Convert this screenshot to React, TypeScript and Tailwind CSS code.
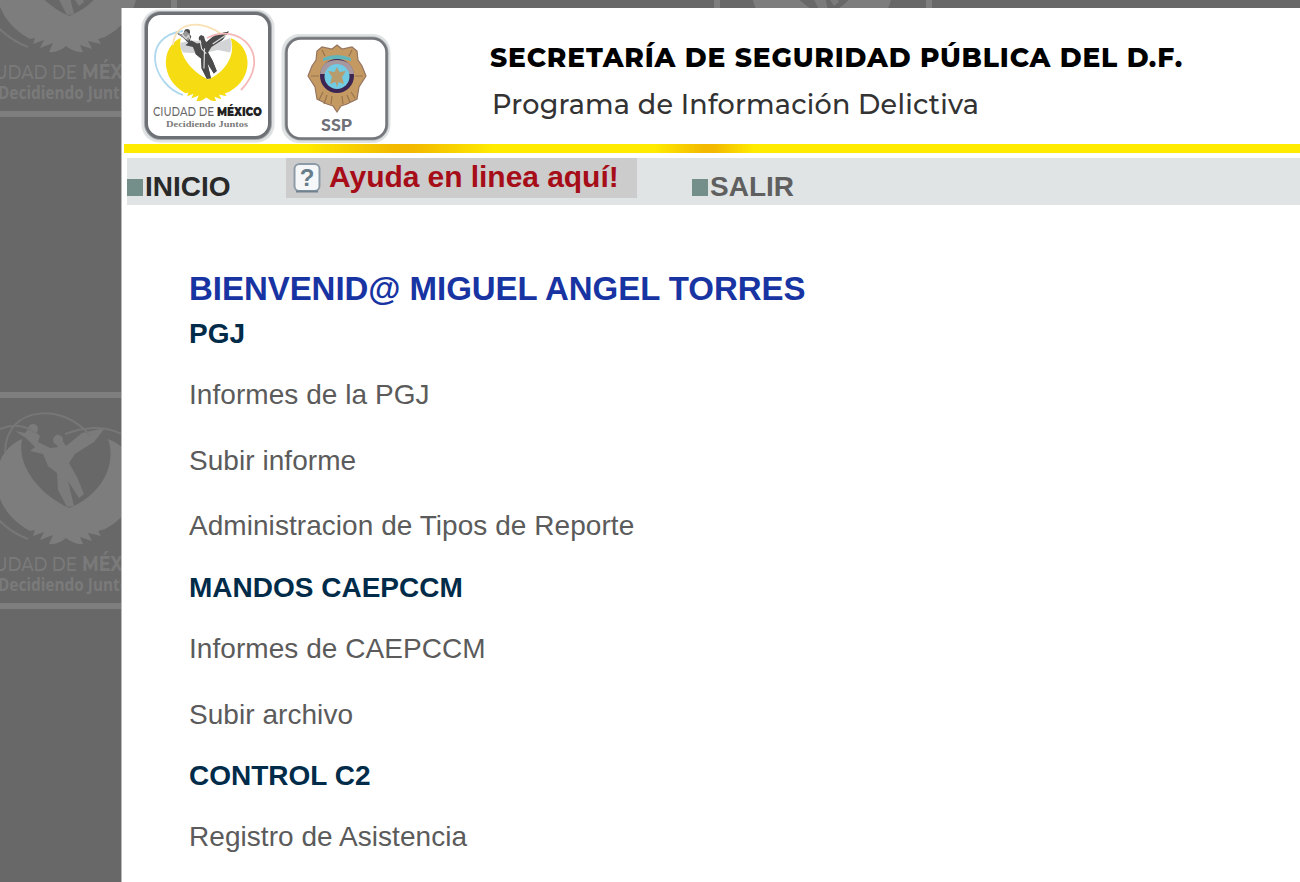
import type { ReactNode } from "react";

const figurePath =
  "M15 22L25 24L30 18L40 27L38 33L50 39L58 38L54 31L57 25L62 31L66 37L82 24L105 19L94 33L75 45L69 54L77 68L84 85L79 89L68 72L74 97L67 98L58 81L57 64L48 57L43 45L30 42L35 38L26 29Z";

function Wings({ fill, heart, figure }: { fill: string; heart: string; figure: string }) {
  return (
    <g>
      <path
        d="M22 30C-12 44 -15 98 30 122L35 121L33 127L44 123L40 131L53 126L49 135Q58 136 66 129Q75 136 83 135L80 128L92 132L88 124L101 127L98 122L105 120C150 96 145 44 108 30Z"
        fill={fill}
      />
      <path d="M22 30C16 60 44 88 69 99C98 88 118 58 108 30Q67 13 22 30Z" fill={heart} />
      <path d={figurePath} fill={figure} />
      <circle cx="33" cy="20" r="5" fill={figure} />
      <circle cx="58" cy="31" r="5" fill={figure} />
    </g>
  );
}

function WatermarkTile({ x, y, caption = true }: { x: number; y: number; caption?: boolean }) {
  return (
    <g transform={`translate(${x} ${y})`}>
      <rect x="-38" y="4" width="212" height="211" rx="4" fill="none" stroke="#7e7e7e" strokeWidth="6" />
      <g transform="translate(0 18)">
        <Wings fill="#7d7d7d" heart="#686868" figure="#7b7b7b" />
        <path d="M5 43C6 -6 67 -5 90 27M0 20Q20 12 35 24M-5 107Q9 123 28 130M65 25Q104 10 134 32" fill="none" stroke="#777" strokeWidth="2" />
      </g>
      {caption && (
        <>
          <text x="-23" y="180" fontSize="21" fontWeight="500" textLength="100" lengthAdjust="spacingAndGlyphs" fill="#7a7a7a" fontFamily="Montserrat, sans-serif">
            CIUDAD DE
          </text>
          <text x="82" y="180" fontSize="21" fontWeight="700" textLength="73" lengthAdjust="spacingAndGlyphs" fill="#7a7a7a" fontFamily="Montserrat, sans-serif">
            MÉXICO
          </text>
          <text x="-2" y="200" fontSize="17" fontWeight="700" textLength="139" lengthAdjust="spacingAndGlyphs" fill="#7a7a7a">
            Decidiendo Juntos
          </text>
        </>
      )}
    </g>
  );
}

function CityLogo() {
  return (
    <svg width="134" height="134" viewBox="0 0 134 134" fontFamily="Montserrat, sans-serif" role="img" aria-label="Ciudad de México">
      <rect x="0.5" y="0.5" width="133" height="133" rx="18" fill="#dfe2e3" />
      <rect x="5.5" y="4.5" width="123" height="124" rx="14" fill="#fff" stroke="#a5a8ab" strokeWidth="5" />
      <rect x="5.5" y="4.5" width="123" height="124" rx="14" fill="#fff" stroke="#6d7075" strokeWidth="3" />
      <g transform="translate(27 11) scale(.58 .6)">
        <Wings fill="#f6dc12" heart="#fff" figure="#4b4b4b" />
        <path d="M22 38L40 34L92 36L107 30Q112 42 107 54L86 50L60 56L26 54Q20 46 22 38Z" fill="#d3d4d6" />
        <path d={figurePath} fill="#4b4b4b" />
        <path d="M16 22l8 2 7-6 8 8-4 9-8-5z" fill="#999" />
        <path d="M24 23l7 8 4-5 5 9M55 33l3 15 8 8M63 47l-1 34M77 40l23-15" fill="none" stroke="#ddd" strokeWidth="2" />
      </g>
      <path d="M42 86C12 76 -2 28 42 22" fill="none" stroke="#add8ee" strokeWidth="1.8" />
      <path d="M32 36C34 10 64 12 80 25" fill="none" stroke="#fae0b5" strokeWidth="1.8" />
      <path d="M66 29C100 12 132 48 100 81" fill="none" stroke="#f4b9b8" strokeWidth="1.8" />
      <text x="12" y="107" fontSize="12" fontWeight="500" textLength="61" lengthAdjust="spacingAndGlyphs" fill="#666">
        CIUDAD DE
      </text>
      <text x="76" y="107" fontSize="12" fontWeight="900" textLength="45" lengthAdjust="spacingAndGlyphs" fill="#222">
        MÉXICO
      </text>
      <text x="25" y="118" fontSize="9" fontWeight="700" textLength="82" lengthAdjust="spacingAndGlyphs" fill="#7b7b7b" fontFamily="'Liberation Serif', serif">
        Decidiendo Juntos
      </text>
    </svg>
  );
}

function PoliceLogo() {
  return (
    <svg width="110" height="110" viewBox="0 0 110 110" role="img" aria-label="SSP">
      <rect x="0.5" y="0" width="109" height="109" rx="18" fill="#dfe2e3" />
      <rect x="5.5" y="4.5" width="100" height="100" rx="14" fill="#fff" stroke="#a5a8ab" strokeWidth="4" />
      <rect x="5.5" y="4.5" width="100" height="100" rx="14" fill="#fff" stroke="#74767b" strokeWidth="2.5" />
      <path
        d="M56 11L61 15L71 13L76 17L77 26L81 32L85 42L78 53L76 65L66 70L60 72L56 78L52 72L46 70L36 65L34 53L27 42L31 32L35 26L36 17L41 13L51 15Z"
        fill="#c49a62"
        stroke="#96745f"
        strokeWidth="1.2"
      />
      <path d="M42 58l-4 8M46 61l-3 9M51 62l-1 8M61 62l1 8M66 61l3 7M70 58l4 6M30 42h8M74 42h8M41 16l3 6M71 16l-3 6" stroke="#98744e" strokeWidth="1.2" />
      <path d="M42 24Q56 18 70 24V27Q56 23 42 27Z" fill="#62b5ba" />
      <circle cx="56" cy="42" r="17" fill="#3c2552" />
      <path d="M39 40Q41 26 56 26T73 40Z" fill="#a6989e" />
      <circle cx="56" cy="42.5" r="12.5" fill="#71cbe3" />
      <path d="M56 33L58.500 38L65 37L61 43L63 50L57.500 48L56 53L54.500 48L49 50L51 43L47 37L53.500 38Z" fill="#b79d6e" />
      <text x="40" y="97" fontFamily="Lato, sans-serif" fontSize="16" fontWeight="900" textLength="31" lengthAdjust="spacingAndGlyphs" fill="#707178">
        SSP
      </text>
    </svg>
  );
}

function MenuLink({ children }: { children: ReactNode }) {
  return <a className="block h-[65.7px] w-fit whitespace-nowrap text-[28px] leading-[66.2px] tracking-[0.05px] text-[#5b5b5b]">{children}</a>;
}

function Section({ title, items }: { title: string; items: string[] }) {
  return (
    <section className="pb-px">
      <h2 className="h-[56px] w-fit whitespace-nowrap pt-3 text-[28px] leading-8 font-bold text-[#002b49]">{title}</h2>
      {items.map((item) => (
        <MenuLink key={item}>{item}</MenuLink>
      ))}
    </section>
  );
}

export default function App() {
  return (
    <div className="relative flex h-[882px] w-[1300px] overflow-hidden bg-[#686868] pt-2 pl-[121px] font-['Liberation_Sans',sans-serif]">
      <svg className="absolute top-0 left-0" width="1300" height="882" fontFamily="'Noto Sans', sans-serif" aria-hidden="true">
        <WatermarkTile x={0} y={-101} />
        <WatermarkTile x={755} y={-101} caption={false} />
        <WatermarkTile x={0} y={391} />
      </svg>
      <main className="relative flex h-full flex-1 flex-col border-l border-[#bbb] bg-white">
        <header className="flex h-[136px] pl-[19px]">
          <div className="h-[134px] pt-px">
            <CityLogo />
          </div>
          <div className="ml-[6px] pt-[26px]">
            <PoliceLogo />
          </div>
          <div className="ml-[99px] pt-[34px] font-['Montserrat','Lato',sans-serif] text-black">
            <h1 className="w-fit whitespace-nowrap text-[26.500px] leading-8 font-extrabold tracking-[0.84px]">SECRETARÍA DE SEGURIDAD PÚBLICA DEL D.F.</h1>
            <p className="mt-[15px] w-fit whitespace-nowrap pl-0.5 text-[27px] leading-8 font-medium tracking-[0.25px] text-[#333]">Programa de Información Delictiva</p>
          </div>
        </header>
        <div className="ml-0.5 h-[9px] shrink-0 bg-[linear-gradient(90deg,#ffeb00_180px,#f2b900_270px,#f2b900_290px,#ffeb00_370px,#ffeb00_530px,#f2b900_580px,#f2b900_590px,#ffeb00_630px)]" />
        <nav className="mt-[5px] ml-[5px] flex h-[47px] shrink-0 bg-[#e0e4e5] text-[28px] leading-8 font-bold">
          <a className="flex h-[47px] w-[159px] items-start pt-[13px] text-[#292929]">
            <span className="mt-2 mr-0.5 h-[17px] w-4 bg-[#748f89]" />
            INICIO
          </a>
          <a className="flex h-10 w-[351px] bg-[#cccccc] pl-[7px] text-[#a60d19]">
            <svg className="mt-1 mr-2" width="28" height="31" viewBox="0 0 28 31" aria-hidden="true">
              <rect x="1.5" y="2" width="25" height="27" rx="5" fill="#f5f7f8" stroke="#8d9ba8" strokeWidth="2" />
              <path d="M3 29.500H25" stroke="#718391" strokeWidth="2" />
              <text x="14" y="24" textAnchor="middle" fontSize="24" fontWeight="700" fill="#667d8b">
                ?
              </text>
            </svg>
            <span className="whitespace-nowrap pt-[3px] text-[30px] leading-8 tracking-[-0.05px]">Ayuda en linea aquí!</span>
          </a>
          <a className="ml-[55px] flex items-start pt-[13px] text-[#5f5f5f]">
            <span className="mt-2 mr-0.5 h-[17px] w-4 bg-[#748f89]" />
            SALIR
          </a>
        </nav>
        <div className="pt-[66px] pl-[67px]">
          <h1 className="h-[35px] w-fit whitespace-nowrap text-[33px] leading-9 font-bold tracking-[-0.04px] text-[#1834a3]">BIENVENID@ MIGUEL ANGEL TORRES</h1>
          <Section title="PGJ" items={["Informes de la PGJ", "Subir informe", "Administracion de Tipos de Reporte"]} />
          <Section title="MANDOS CAEPCCM" items={["Informes de CAEPCCM", "Subir archivo"]} />
          <Section title="CONTROL C2" items={["Registro de Asistencia"]} />
        </div>
      </main>
    </div>
  );
}
